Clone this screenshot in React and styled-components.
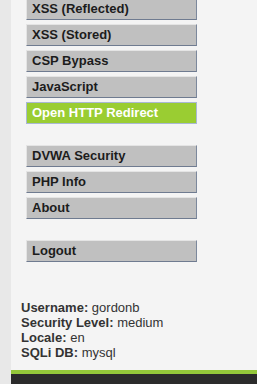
import React from "react";
import styled, { createGlobalStyle } from "styled-components";

const GlobalStyle = createGlobalStyle`
  html, body {
    margin: 0;
    padding: 0;
    background: #f4f4f4;
    overflow: hidden;
  }
  body {
    font-family: "Liberation Sans", Arial, sans-serif;
  }
`;

const groups = [
  ["XSS (Reflected)", "XSS (Stored)", "CSP Bypass", "JavaScript", "Open HTTP Redirect"],
  ["DVWA Security", "PHP Info", "About"],
  ["Logout"],
];

const info = [
  ["Username", "gordonb"],
  ["Security Level", "medium"],
  ["Locale", "en"],
  ["SQLi DB", "mysql"],
];

const App = () => {
  return (
    <>
      <GlobalStyle />
      <Page>
        <Strip />
        <Main>
          <Menu>
            {groups.map((group, gi) => (
              <Group key={gi}>
                {group.map((item) => (
                  <MenuItem key={item} selected={item === "Open HTTP Redirect"}>
                    {item}
                  </MenuItem>
                ))}
              </Group>
            ))}
          </Menu>
          <Info>
            {info.map(([label, value]) => (
              <InfoLine key={label}>
                <b>{label}:</b> {value}
              </InfoLine>
            ))}
          </Info>
          <Footer />
        </Main>
      </Page>
    </>
  );
};

export default App;

const Page = styled.div`
  display: grid;
  grid-template-columns: 11px 1fr;
  height: 384px;
`;

const Strip = styled.div`
  background: #e8e8e8;
`;

const Main = styled.div`
  display: flex;
  flex-direction: column;
  background: #f4f4f4;
`;

const Menu = styled.div`
  display: flex;
  flex-direction: column;
  gap: 21px;
  margin-top: -2px;
  padding-left: 15px;
`;

const Group = styled.div`
  display: flex;
  flex-direction: column;
  gap: 4px;
`;

const MenuItem = styled.div`
  box-sizing: border-box;
  width: 171px;
  height: 22px;
  padding-left: 5px;
  line-height: 20px;
  font-size: 13px;
  font-weight: bold;
  color: ${(p) => (p.selected ? "#ffffff" : "#1c1c1c")};
  background: ${(p) => (p.selected ? "#9acd32" : "#c0c0c0")};
  border: 1px solid;
  border-color: ${(p) =>
    p.selected
      ? "#a9b8d4"
      : "#e4e4e4 #7c889c #6f7b90 #e4e4e4"};
`;

const Info = styled.div`
  margin-top: 38px;
  padding-left: 10px;
  font-size: 13px;
  line-height: 15px;
  color: #333333;
`;

const InfoLine = styled.div`
  b {
    color: #333333;
  }
`;

const Footer = styled.div`
  margin-top: 10px;
  flex: 1;
  background: #2b2b2b;
  border-top: 4px solid #94c83a;
`;
